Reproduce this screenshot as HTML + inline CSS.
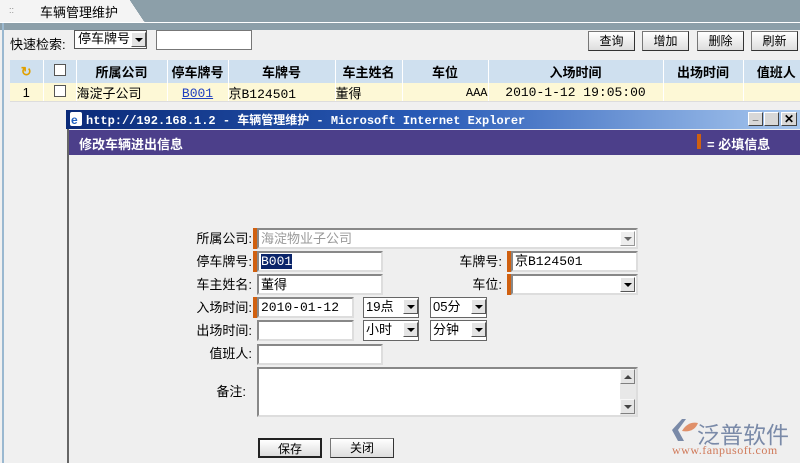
<!DOCTYPE html>
<html><head><meta charset="utf-8"><style>
*{box-sizing:border-box;margin:0;padding:0}
body{width:800px;height:463px;overflow:hidden;background:#f0f0f0;font-family:"Liberation Sans","Noto Sans CJK SC",sans-serif;font-size:13px;color:#000;position:relative}
.a{position:absolute}
.btn{position:absolute;height:20px;background:linear-gradient(#fff,#ddd);border:1px solid #777;border-right-color:#333;border-bottom-color:#333;text-align:center;line-height:18px;font-size:12px}
.inp{position:absolute;background:#fff;border:2px solid #888;border-right-color:#ddd;border-bottom-color:#ddd;height:21px;font-size:13px;line-height:17px;padding-left:2px}
.req{position:absolute;width:4px;background:#d06010}
.dd{position:absolute;width:15px;height:15px;background:#e4e4e4;border:1px solid #fff;border-right-color:#555;border-bottom-color:#555}
.dd:after{content:"";position:absolute;left:3px;top:5px;border:4px solid transparent;border-top:4px solid #000}
.dd.up:after{top:1px;border-top:4px solid transparent;border-bottom:4px solid #000}
.lbl{position:absolute;font-size:13px;text-align:right;width:80px;line-height:16px}
td{border-right:1px solid #fff;text-align:center;font-size:13px}
</style></head><body>
<div class="a" style="left:0;top:0;width:800px;height:30px;background:#8c9fa9"></div>
<div class="a" style="left:0;top:0;width:130px;height:22px;background:#f4f4f4"></div>
<div class="a" style="left:120px;top:0;width:34px;height:22px;background:linear-gradient(56deg,#f4f4f4 50%,transparent 50%)"></div>
<div class="a" style="left:9px;top:5px;font-size:9px;color:#888">::</div>
<div class="a" style="left:40px;top:2px;font-size:13px">车辆管理维护</div>
<div class="a" style="left:0;top:22px;width:800px;height:1px;background:#fff"></div>
<div class="a" style="left:2px;top:23px;width:2px;height:440px;background:#9ab8d0"></div>
<div class="a" style="left:10px;top:34px">快速检索:</div>
<div class="a" style="left:74px;top:30px;width:73px;height:19px;background:#fff;border:1px solid #555;padding-left:3px;line-height:16px">停车牌号</div>
<div class="dd" style="left:131px;top:32px"></div>
<div class="a" style="left:156px;top:30px;width:96px;height:20px;background:#fff;border:1px solid #777"></div>
<div class="btn" style="left:588px;top:31px;width:47px">查询</div>
<div class="btn" style="left:642px;top:31px;width:47px">增加</div>
<div class="btn" style="left:697px;top:31px;width:47px">删除</div>
<div class="btn" style="left:751px;top:31px;width:47px">刷新</div>
<table class="a" style="left:10px;top:60px;border-collapse:collapse;width:800px">
<tr style="background:#cfe0ef;height:23px;font-weight:bold"><td style="width:33px;color:#e0a000">↻</td><td style="width:33px"><span style="display:inline-block;width:12px;height:12px;border:1px solid #555;background:#fff"></span></td><td style="width:91px">所属公司</td><td style="width:61px">停车牌号</td><td style="width:107px">车牌号</td><td style="width:67px">车主姓名</td><td style="width:86px">车位</td><td style="width:175px">入场时间</td><td style="width:80px">出场时间</td><td>值班人</td></tr>
<tr style="background:#fdf8d6;height:18px"><td>1</td><td><span style="display:inline-block;width:12px;height:12px;border:1px solid #555;background:#fff"></span></td><td style="text-align:left">海淀子公司</td><td><span style="color:#2040c0;text-decoration:underline;font-family:'Liberation Mono',monospace">B001</span></td><td style="text-align:left;font-family:'Liberation Mono','Noto Sans CJK SC',monospace">京B124501</td><td style="text-align:left">董得</td><td style="text-align:right;font-family:'Liberation Mono',monospace;font-size:12px">AAA</td><td style="font-family:'Liberation Mono',monospace">2010-1-12 19:05:00</td><td></td><td></td></tr>
</table>
<div class="a" style="left:10px;top:101px;width:790px;height:1px;background:#ddd"></div>
<div class="a" style="left:66px;top:110px;width:734px;height:19px;background:linear-gradient(90deg,#0a2a78,#2a5cb8 50%,#a8c8ef)"></div>
<div class="a" style="left:70px;top:112px;width:12px;height:14px;background:#fff;border-radius:2px"></div>
<div class="a" style="left:71px;top:113px;color:#2060c0;font-weight:bold;font-size:12px">e</div>
<div class="a" style="left:86px;top:111px;color:#fff;font-weight:bold;font-size:12px;font-family:'Liberation Mono','Noto Sans CJK SC',monospace">http://192.168.1.2 - 车辆管理维护 - Microsoft Internet Explorer</div>
<div class="a" style="left:748px;top:112px;width:15px;height:14px;background:#d8d8d8;border:1px solid #fff;border-right-color:#444;border-bottom-color:#444;font-size:10px;text-align:center;line-height:8px;font-weight:bold">_</div>
<div class="a" style="left:764px;top:112px;width:15px;height:14px;background:#d8d8d8;border:1px solid #fff;border-right-color:#444;border-bottom-color:#444"></div>
<div class="a" style="left:781px;top:112px;width:16px;height:14px;background:#d8d8d8;border:1px solid #fff;border-right-color:#444;border-bottom-color:#444;font-size:12px;text-align:center;line-height:12px;font-weight:bold">✕</div>
<div class="a" style="left:67px;top:129px;width:733px;height:334px;background:#efefef;border-left:2px solid #666"></div>
<div class="a" style="left:69px;top:130px;width:731px;height:25px;background:#4c3f8a"></div>
<div class="a" style="left:79px;top:134px;color:#fff;font-weight:bold;font-size:13px">修改车辆进出信息</div>
<div class="req" style="left:697px;top:134px;height:15px"></div>
<div class="a" style="left:707px;top:134px;color:#fff;font-weight:bold;font-size:13px">= 必填信息</div>
<div class="lbl" style="left:172px;top:231px">所属公司:</div>
<div class="req" style="left:253px;top:228px;height:21px"></div>
<div class="inp" style="left:257px;top:228px;width:381px;color:#999">海淀物业子公司</div>
<div class="dd" style="left:620px;top:231px;opacity:.6"></div>
<div class="lbl" style="left:172px;top:254px">停车牌号:</div>
<div class="req" style="left:253px;top:251px;height:21px"></div>
<div class="inp" style="left:257px;top:251px;width:126px;font-family:'Liberation Mono',monospace"><span style="background:#0a246a;color:#fff">B001</span></div>
<div class="lbl" style="left:422px;top:254px">车牌号:</div>
<div class="req" style="left:507px;top:251px;height:21px"></div>
<div class="inp" style="left:511px;top:251px;width:127px;font-family:'Liberation Mono','Noto Sans CJK SC',monospace">京B124501</div>
<div class="lbl" style="left:172px;top:277px">车主姓名:</div>
<div class="inp" style="left:257px;top:274px;width:126px">董得</div>
<div class="lbl" style="left:422px;top:277px">车位:</div>
<div class="req" style="left:507px;top:274px;height:21px"></div>
<div class="inp" style="left:511px;top:274px;width:127px"></div>
<div class="dd" style="left:620px;top:277px"></div>
<div class="lbl" style="left:172px;top:300px">入场时间:</div>
<div class="req" style="left:253px;top:297px;height:21px"></div>
<div class="inp" style="left:257px;top:297px;width:97px;font-family:'Liberation Mono',monospace">2010-01-12</div>
<div class="inp" style="left:363px;top:297px;width:56px;border:1px solid #666">19点</div>
<div class="dd" style="left:403px;top:299px"></div>
<div class="inp" style="left:430px;top:297px;width:57px;border:1px solid #666">05分</div>
<div class="dd" style="left:471px;top:299px"></div>
<div class="lbl" style="left:172px;top:323px">出场时间:</div>
<div class="inp" style="left:257px;top:320px;width:97px"></div>
<div class="inp" style="left:363px;top:320px;width:56px;border:1px solid #666">小时</div>
<div class="dd" style="left:403px;top:322px"></div>
<div class="inp" style="left:430px;top:320px;width:57px;border:1px solid #666">分钟</div>
<div class="dd" style="left:471px;top:322px"></div>
<div class="lbl" style="left:172px;top:346px">值班人:</div>
<div class="inp" style="left:257px;top:344px;width:126px"></div>
<div class="lbl" style="left:166px;top:384px">备注:</div>
<div class="inp" style="left:257px;top:367px;width:381px;height:50px"></div>
<div class="a" style="left:620px;top:369px;width:16px;height:46px;background:#e8e8e8"></div>
<div class="dd up" style="left:620px;top:369px;opacity:.7"></div>
<div class="dd" style="left:620px;top:399px;opacity:.7"></div>
<div class="btn" style="left:258px;top:438px;width:64px;border:2px solid #222">保存</div>
<div class="btn" style="left:330px;top:438px;width:64px">关闭</div>
<svg class="a" style="left:670px;top:417px" width="32" height="26" viewBox="0 0 32 26"><path d="M2 13 L12 2 L16 2 L8 13 L14 24 L8 24 Z" fill="#7a8aa8"/><path d="M12 14 Q18 4 28 6 Q24 16 12 14 Z" fill="#e0906a"/></svg>
<div class="a" style="left:697px;top:416px;font-size:23px;color:#7a8aa8;letter-spacing:0px">泛普软件</div>
<div class="a" style="left:672px;top:443px;font-size:12px;color:#d07a5a;font-family:'Liberation Serif',serif;letter-spacing:.5px">www.fanpusoft.com</div>
</body></html>
